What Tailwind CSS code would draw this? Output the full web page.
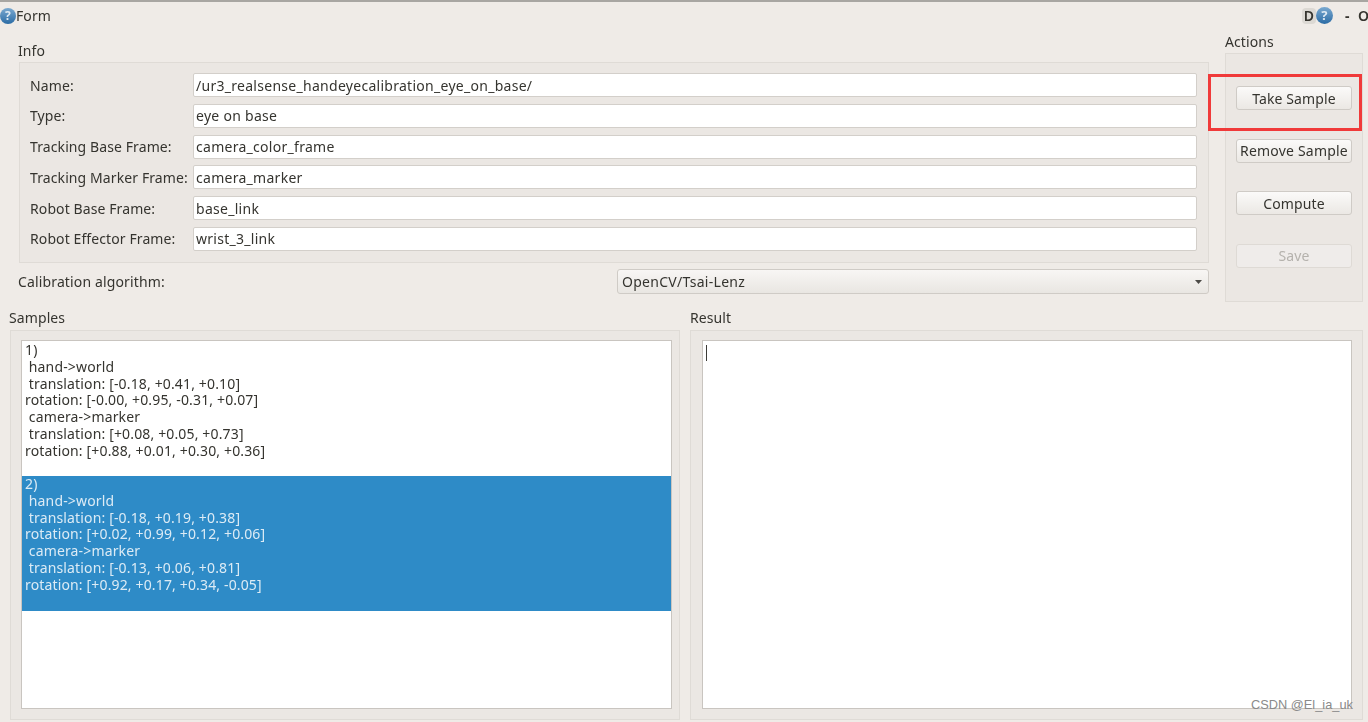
<!DOCTYPE html>
<html lang="en">
<head>
    <meta charset="UTF-8">
    <meta name="viewport" content="width=device-width, initial-scale=1.0">
    <title>Form</title>
    <script src="https://cdn.jsdelivr.net/npm/@tailwindcss/browser@4"></script>
</head>
<body class="relative w-[1368px] h-[722px] overflow-hidden bg-[#efebe7] font-['Noto_Sans',sans-serif] text-[14px] tracking-[0.1px] text-[#35342f]">
    <div class="w-full h-full flex flex-col blur-[0.45px]">
        <!-- title bar -->
        <header class="h-[30px] shrink-0 border-t-2 border-[#a8a6a2] pb-px flex items-center">
            <div class="w-[16px] h-[16px] rounded-full bg-gradient-to-b from-[#7aa9d0] to-[#2a6ca5] text-[#dfeaf3] text-[12px] font-bold flex items-center justify-center">?</div>
            <span>Form</span>
            <div class="ml-auto flex items-center">
                <span class="w-[14px] h-[16px] rounded-sm bg-[#dcd9d4] font-semibold flex items-center justify-center">D</span>
                <div class="w-[17px] h-[17px] rounded-full bg-gradient-to-b from-[#7aa9d0] to-[#2a6ca5] text-[#dfeaf3] text-[13px] font-bold flex items-center justify-center">?</div>
                <span class="ml-[12px] w-[13px] font-bold">-</span>
                <span class="w-[10px] overflow-hidden font-semibold">O</span>
            </div>
        </header>

        <section class="flex items-start pl-[18px] h-[272px] shrink-0">
            <div class="w-[1191px] pt-[11px]">
                <div class="h-[21px] leading-[19px]">Info</div>
                <div class="ml-px h-[201px] border border-[#dfdbd6] bg-[#ebe7e3] pl-[10px] pr-[11px] pt-[10px] flex flex-col gap-[6.8px]">
                    <div class="flex items-center h-[24px]"><label class="w-[163px]">Name:</label><input readonly value="/ur3_realsense_handeyecalibration_eye_on_base/" class="flex-1 h-[24px] px-[2px] tracking-[0.28px] bg-white border border-[#d3cfca] rounded-[2px] outline-none"></div>
                    <div class="flex items-center h-[24px]"><label class="w-[163px]">Type:</label><input readonly value="eye on base" class="flex-1 h-[24px] px-[2px] tracking-[0.28px] bg-white border border-[#d3cfca] rounded-[2px] outline-none"></div>
                    <div class="flex items-center h-[24px]"><label class="w-[163px]">Tracking Base Frame:</label><input readonly value="camera_color_frame" class="flex-1 h-[24px] px-[2px] tracking-[0.28px] bg-white border border-[#d3cfca] rounded-[2px] outline-none"></div>
                    <div class="flex items-center h-[24px]"><label class="w-[163px]">Tracking Marker Frame:</label><input readonly value="camera_marker" class="flex-1 h-[24px] px-[2px] tracking-[0.28px] bg-white border border-[#d3cfca] rounded-[2px] outline-none"></div>
                    <div class="flex items-center h-[24px]"><label class="w-[163px]">Robot Base Frame:</label><input readonly value="base_link" class="flex-1 h-[24px] px-[2px] tracking-[0.28px] bg-white border border-[#d3cfca] rounded-[2px] outline-none"></div>
                    <div class="flex items-center h-[24px]"><label class="w-[163px]">Robot Effector Frame:</label><input readonly value="wrist_3_link" class="flex-1 h-[24px] px-[2px] tracking-[0.28px] bg-white border border-[#d3cfca] rounded-[2px] outline-none"></div>
                </div>
                <div class="mt-[6px] h-[25px] flex items-center justify-between">
                    <span class="tracking-[0.14px]">Calibration algorithm:</span>
                    <div class="w-[592px] h-[25px] pl-[4px] pr-[6px] flex items-center justify-between border border-[#cfcbc6] rounded-[3px] bg-gradient-to-b from-[#f8f6f4] to-[#e9e6e2]">
                        <span class="tracking-[0.28px]">OpenCV/Tsai-Lenz</span>
                        <svg width="7" height="4" viewBox="0 0 7 4"><path d="M0 0h7L3.5 4z" fill="#4c4a46"/></svg>
                    </div>
                </div>
            </div>
            <div class="ml-[16px] w-[138px] pt-[2px]">
                <div class="h-[21px] leading-[19px]">Actions</div>
                <div class="h-[249px] border border-[#dfdbd6] bg-[#ebe7e3] pl-[10px] pr-[10px] pt-[32px] flex flex-col gap-[28.5px]">
                    <button class="w-[116px] h-[24px] shrink-0 border border-[#cfcbc6] rounded-[3px] bg-gradient-to-b from-[#fbfaf9] to-[#ebe8e4]">Take Sample</button>
                    <button class="w-[116px] h-[24px] shrink-0 border border-[#cfcbc6] rounded-[3px] bg-gradient-to-b from-[#fbfaf9] to-[#ebe8e4] tracking-[0.2px]">Remove Sample</button>
                    <button class="w-[116px] h-[24px] shrink-0 border border-[#cfcbc6] rounded-[3px] bg-gradient-to-b from-[#fbfaf9] to-[#ebe8e4]">Compute</button>
                    <button disabled class="w-[116px] h-[24px] shrink-0 border border-[#dedad5] rounded-[3px] bg-[#efecea] text-[#b5b2ad]">Save</button>
                </div>
            </div>
        </section>

        <section class="flex mt-[6px] pl-[10px]">
            <div class="w-[670px]">
                <div class="h-[22px] -ml-px leading-[19px]">Samples</div>
                <div class="h-[390px] border border-[#dfdbd6] bg-[#ebe7e3] pl-[10px] pr-[7px] pt-[9px] pb-[10px]">
                    <ul class="h-full bg-white border border-[#c9c5c0] leading-[16.8px] tracking-[0.15px] overflow-hidden">
                        <li class="h-[135px] pl-[3px] pt-[1px] whitespace-pre">1)
 hand-&gt;world
 translation: [-0.18, +0.41, +0.10]
rotation: [-0.00, +0.95, -0.31, +0.07]
 camera-&gt;marker
 translation: [+0.08, +0.05, +0.73]
rotation: [+0.88, +0.01, +0.30, +0.36]</li>
                        <li class="h-[135px] pl-[3px] whitespace-pre bg-[#2e8bc7] text-[#dcebf5]">2)
 hand-&gt;world
 translation: [-0.18, +0.19, +0.38]
rotation: [+0.02, +0.99, +0.12, +0.06]
 camera-&gt;marker
 translation: [-0.13, +0.06, +0.81]
rotation: [+0.92, +0.17, +0.34, -0.05]</li>
                    </ul>
                </div>
            </div>
            <div class="ml-[10px] w-[673px]">
                <div class="h-[22px] leading-[19px]">Result</div>
                <div class="h-[390px] border border-[#dfdbd6] bg-[#ebe7e3] pl-[11px] pr-[10px] pt-[9px] pb-[10px]">
                    <div class="h-full bg-white border border-[#c9c5c0] pl-[3px] pt-[4px]">
                        <div class="w-px h-[16px] bg-[#3c3b37]"></div>
                    </div>
                </div>
            </div>
        </section>
    </div>

    <!-- annotation and watermark lie over the screenshot -->
    <div class="absolute left-[1208px] top-[74px] w-[154px] h-[57px] border-[3px] border-[#f03a3a]"></div>
    <div class="absolute left-[1251px] top-[697px] font-['Liberation_Sans',sans-serif] text-[12.8px] tracking-normal leading-[16px] text-[#8a8a8a]">CSDN @El_ia_uk</div>
</body>
</html>
